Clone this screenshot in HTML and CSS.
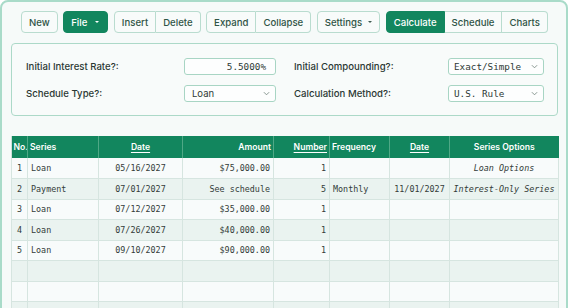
FILE: index.html
```html
<!DOCTYPE html>
<html>
<head>
<meta charset="utf-8">
<link rel="stylesheet" href="styles.css">
</head>
<body>
<div class="app">
  <div class="toolbar">
    <button class="btn">New</button>
    <button class="btn primary wide-caret">File <span class="caret light"></span></button>
    <div class="group">
      <button class="btn">Insert</button>
      <button class="btn">Delete</button>
    </div>
    <div class="group">
      <button class="btn">Expand</button>
      <button class="btn">Collapse</button>
    </div>
    <button class="btn">Settings <span class="caret"></span></button>
    <div class="group">
      <button class="btn primary">Calculate</button>
      <button class="btn">Schedule</button>
      <button class="btn">Charts</button>
    </div>
  </div>

  <div class="panel">
    <div class="field">
      <span class="label">Initial Interest Rate?:</span>
      <span class="control input">5.5000%</span>
    </div>
    <div class="field">
      <span class="label">Initial Compounding?:</span>
      <span class="control select">Exact/Simple<svg class="chev" viewBox="0 0 8 5"><path d="M1 1l3 3 3-3" fill="none" stroke="#7a8a84" stroke-width="1"/></svg></span>
    </div>
    <div class="field">
      <span class="label">Schedule Type?:</span>
      <span class="control select sans">Loan<svg class="chev" viewBox="0 0 8 5"><path d="M1 1l3 3 3-3" fill="none" stroke="#7a8a84" stroke-width="1"/></svg></span>
    </div>
    <div class="field">
      <span class="label">Calculation Method?:</span>
      <span class="control select">U.S. Rule<svg class="chev" viewBox="0 0 8 5"><path d="M1 1l3 3 3-3" fill="none" stroke="#7a8a84" stroke-width="1"/></svg></span>
    </div>
  </div>

  <div class="table-wrap">
    <table class="grid">
      <colgroup>
        <col class="c-no"><col class="c-series"><col class="c-date"><col class="c-amount">
        <col class="c-number"><col class="c-freq"><col class="c-date2"><col class="c-opts">
      </colgroup>
      <thead>
        <tr>
          <th class="l">No.</th>
          <th class="l">Series</th>
          <th class="c"><u>Date</u></th>
          <th class="r">Amount</th>
          <th class="r"><u>Number</u></th>
          <th class="l">Frequency</th>
          <th class="c"><u>Date</u></th>
          <th class="c">Series Options</th>
        </tr>
      </thead>
      <tbody>
        <tr><td class="c">1</td><td>Loan</td><td class="c">05/16/2027</td><td class="r">$75,000.00</td><td class="r">1</td><td></td><td></td><td class="c i">Loan Options</td></tr>
        <tr><td class="c">2</td><td>Payment</td><td class="c">07/01/2027</td><td class="r">See schedule</td><td class="r">5</td><td>Monthly</td><td class="c">11/01/2027</td><td class="c i">Interest-Only Series</td></tr>
        <tr><td class="c">3</td><td>Loan</td><td class="c">07/12/2027</td><td class="r">$35,000.00</td><td class="r">1</td><td></td><td></td><td></td></tr>
        <tr><td class="c">4</td><td>Loan</td><td class="c">07/26/2027</td><td class="r">$40,000.00</td><td class="r">1</td><td></td><td></td><td></td></tr>
        <tr><td class="c">5</td><td>Loan</td><td class="c">09/10/2027</td><td class="r">$90,000.00</td><td class="r">1</td><td></td><td></td><td></td></tr>
        <tr><td></td><td></td><td></td><td></td><td></td><td></td><td></td><td></td></tr>
        <tr><td></td><td></td><td></td><td></td><td></td><td></td><td></td><td></td></tr>
        <tr><td></td><td></td><td></td><td></td><td></td><td></td><td></td><td></td></tr>
      </tbody>
    </table>
  </div>
</div>
</body>
</html>
```

FILE: styles.css
```css
* { box-sizing: border-box; }
html, body { margin: 0; padding: 0; background: #ffffff; }
body { font-family: Inter, "Noto Sans", sans-serif; color: #2c3a35; }

.app {
  width: 568px;
  height: 330px;
  border: 2px solid #a9dbc9;
  border-radius: 8px;
  background: #f6faf9;
  padding: 9px 8px 0 9px;
  overflow: hidden;
}

.toolbar {
  display: flex;
  justify-content: center;
  gap: 5.5px;
  height: 22px;
}

.group { display: flex; }

.btn {
  margin: 0;
  font-family: Inter, sans-serif;
  font-size: 9.6px;
  font-weight: 500;
  color: #2f5445;
  background: #f8fbfa;
  border: 1px solid #b9dccf;
  border-radius: 4px;
  height: 22px;
  padding: 0 7px;
  display: flex;
  align-items: center;
  gap: 6px;
  cursor: pointer;
}
.btn.wide-caret { gap: 8px; padding-right: 8px; }

.group .btn { border-radius: 0; }
.group .btn + .btn { border-left: none; }
.group .btn:first-child { border-radius: 4px 0 0 4px; }
.group .btn:last-child { border-radius: 0 4px 4px 0; }

.btn.primary {
  background: #12865e;
  border-color: #12865e;
  color: #ffffff;
}

.caret {
  width: 0; height: 0;
  border-left: 2px solid transparent;
  border-right: 2px solid transparent;
  border-top: 2.5px solid #3f5b50;
}
.caret.light { border-top-color: #ffffff; }

.panel {
  margin-top: 10px;
  height: 73px;
  border: 1px solid #acd9c8;
  border-radius: 4px;
  background: #f8fbfa;
  padding: 14px 13px 0 14px;
  display: grid;
  grid-template-columns: 250px 250px;
  column-gap: 18px;
  row-gap: 10px;
  align-content: start;
}

.field {
  display: flex;
  align-items: center;
  justify-content: space-between;
  height: 17px;
}

.label {
  font-size: 9.6px;
  font-weight: 500;
  color: #2b3833;
}

.control {
  height: 17px;
  border: 1px solid #a8d5c4;
  border-radius: 3px;
  background: #fdfefe;
  font-family: "DejaVu Sans Mono", monospace;
  font-size: 9.3px;
  color: #2e3a36;
  display: flex;
  align-items: center;
}

.input {
  justify-content: flex-end;
  padding-right: 9px;
}

.select {
  width: 96px;
  padding-left: 5px;
  padding-right: 5px;
  justify-content: space-between;
}

.field:nth-child(1) .control, .field:nth-child(3) .control { width: 92px; }

.select.sans { font-family: Inter, sans-serif; font-size: 9.5px; padding-left: 7px; }

.chev { width: 7px; height: 5px; }

.table-wrap {
  margin-top: 20px;
  border-left: 1px solid #cfe0da;
  border-right: 1px solid #cfe0da;
}

.grid {
  width: 547px;
  margin-left: -1px;
  border-collapse: collapse;
  table-layout: fixed;
}

.c-no { width: 16px; }
.c-series { width: 71px; }
.c-date { width: 84px; }
.c-amount { width: 91px; }
.c-number { width: 56px; }
.c-freq { width: 60px; }
.c-date2 { width: 60px; }
.c-opts { width: 109px; }

.grid th {
  background: #12865e;
  color: #ffffff;
  font-size: 8.6px;
  font-weight: 600;
  height: 22px;
  padding: 0 2px;
  border-left: 1px solid #4fa886;
  white-space: nowrap;
  overflow: hidden;
}
.grid th:first-child { border-left: none; padding: 0 1px 0 2px; }
.grid th u { text-decoration-thickness: 1px; text-underline-offset: 1.5px; }

.grid td {
  font-family: "DejaVu Sans Mono", monospace;
  font-size: 8.4px;
  color: #333c39;
  height: 20.5px;
  padding: 0 3px;
  border: 1px solid #d6e5e0;
  border-top: none;
  white-space: nowrap;
  overflow: hidden;
}

.grid tbody tr:nth-child(odd) td { background: #f8fbfb; }
.grid tbody tr:nth-child(even) td { background: #eaf3f0; }

.l { text-align: left; }
.c { text-align: center; }
.r { text-align: right; }
.i { font-style: italic; }
```
